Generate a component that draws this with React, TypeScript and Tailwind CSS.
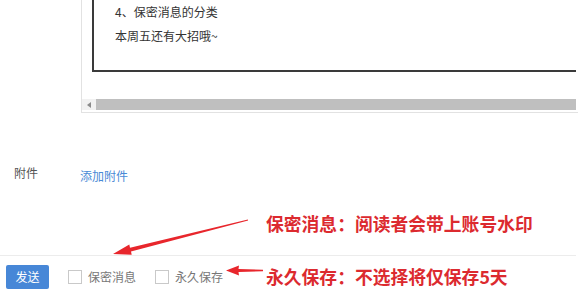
export default function App() {
  return (
    <div className="relative w-[586px] h-[291px] overflow-hidden bg-white font-['Noto_Sans_CJK_SC',sans-serif] text-[#333]">
      {/* editor area */}
      <div className="ml-[81px] mr-[8px] h-[113px] border-l border-b border-[#e2e2e2] flex flex-col">
        <div className="ml-[10px] mr-[2px] h-[72px] border-l-2 border-b-2 border-[#3a3a3a] pl-[21px] text-[12px]">
          <p className="mt-[3px] leading-[18px]">4、保密消息的分类</p>
          <p className="mt-[6px] leading-[18px]">本周五还有大招哦~</p>
        </div>
        <div className="mt-[27px] mr-[2px] flex h-[11px]">
          <div className="w-[14px] h-full bg-[#f1f1f1] flex items-center justify-center">
            <svg width="4" height="6" viewBox="0 0 4 6">
              <path d="M4 0 L0 3 L4 6 Z" fill="#8a8a8a" />
            </svg>
          </div>
          <div className="flex-1 h-full bg-[#bfbfbf]" />
        </div>
      </div>

      {/* attachment row */}
      <div className="mt-[51px] flex text-[12px] leading-[18px]">
        <span className="ml-[14px] text-[#555]">附件</span>
        <span className="ml-[42px] mt-[3px] text-[#4a8ad6]">添加附件</span>
      </div>

      {/* bottom bar */}
      <div className="mt-[70px] mr-[10px] border-t border-[#ececec] pt-[9px] pl-[6px] flex items-center text-[12px]">
        <button className="w-[43px] h-[24px] bg-[#4787d7] text-white rounded-[2px] leading-none">
          发送
        </button>
        <span className="ml-[19px] w-[14px] h-[14px] border border-[#c9c9c9] bg-white" />
        <span className="ml-[6px] text-[#777]">保密消息</span>
        <span className="ml-[19px] w-[14px] h-[14px] border border-[#c9c9c9] bg-white" />
        <span className="ml-[6px] text-[#777]">永久保存</span>
      </div>

      {/* annotations */}
      <p className="absolute left-[266px] top-[210px] text-[17.8px] leading-[26px] font-bold text-[#dc2a2f] whitespace-nowrap">
        保密消息：阅读者会带上账号水印
      </p>
      <p className="absolute left-[266px] top-[263px] text-[17.8px] leading-[26px] font-bold text-[#dc2a2f] whitespace-nowrap">
        永久保存：不选择将仅保存5天
      </p>
      <svg className="absolute left-0 top-0" width="586" height="291" viewBox="0 0 586 291">
        <polygon
          points="113,254 131.7,254.8 131,251.5 248.1,220.6 247.9,219.4 130,247.7 129.3,244.4"
          fill="#e8262c"
        />
        <polygon
          points="226,270.5 239,265.5 238.5,269 263,269.8 263,271.2 238.5,272 239,275.5"
          fill="#e8262c"
        />
      </svg>
    </div>
  );
}
